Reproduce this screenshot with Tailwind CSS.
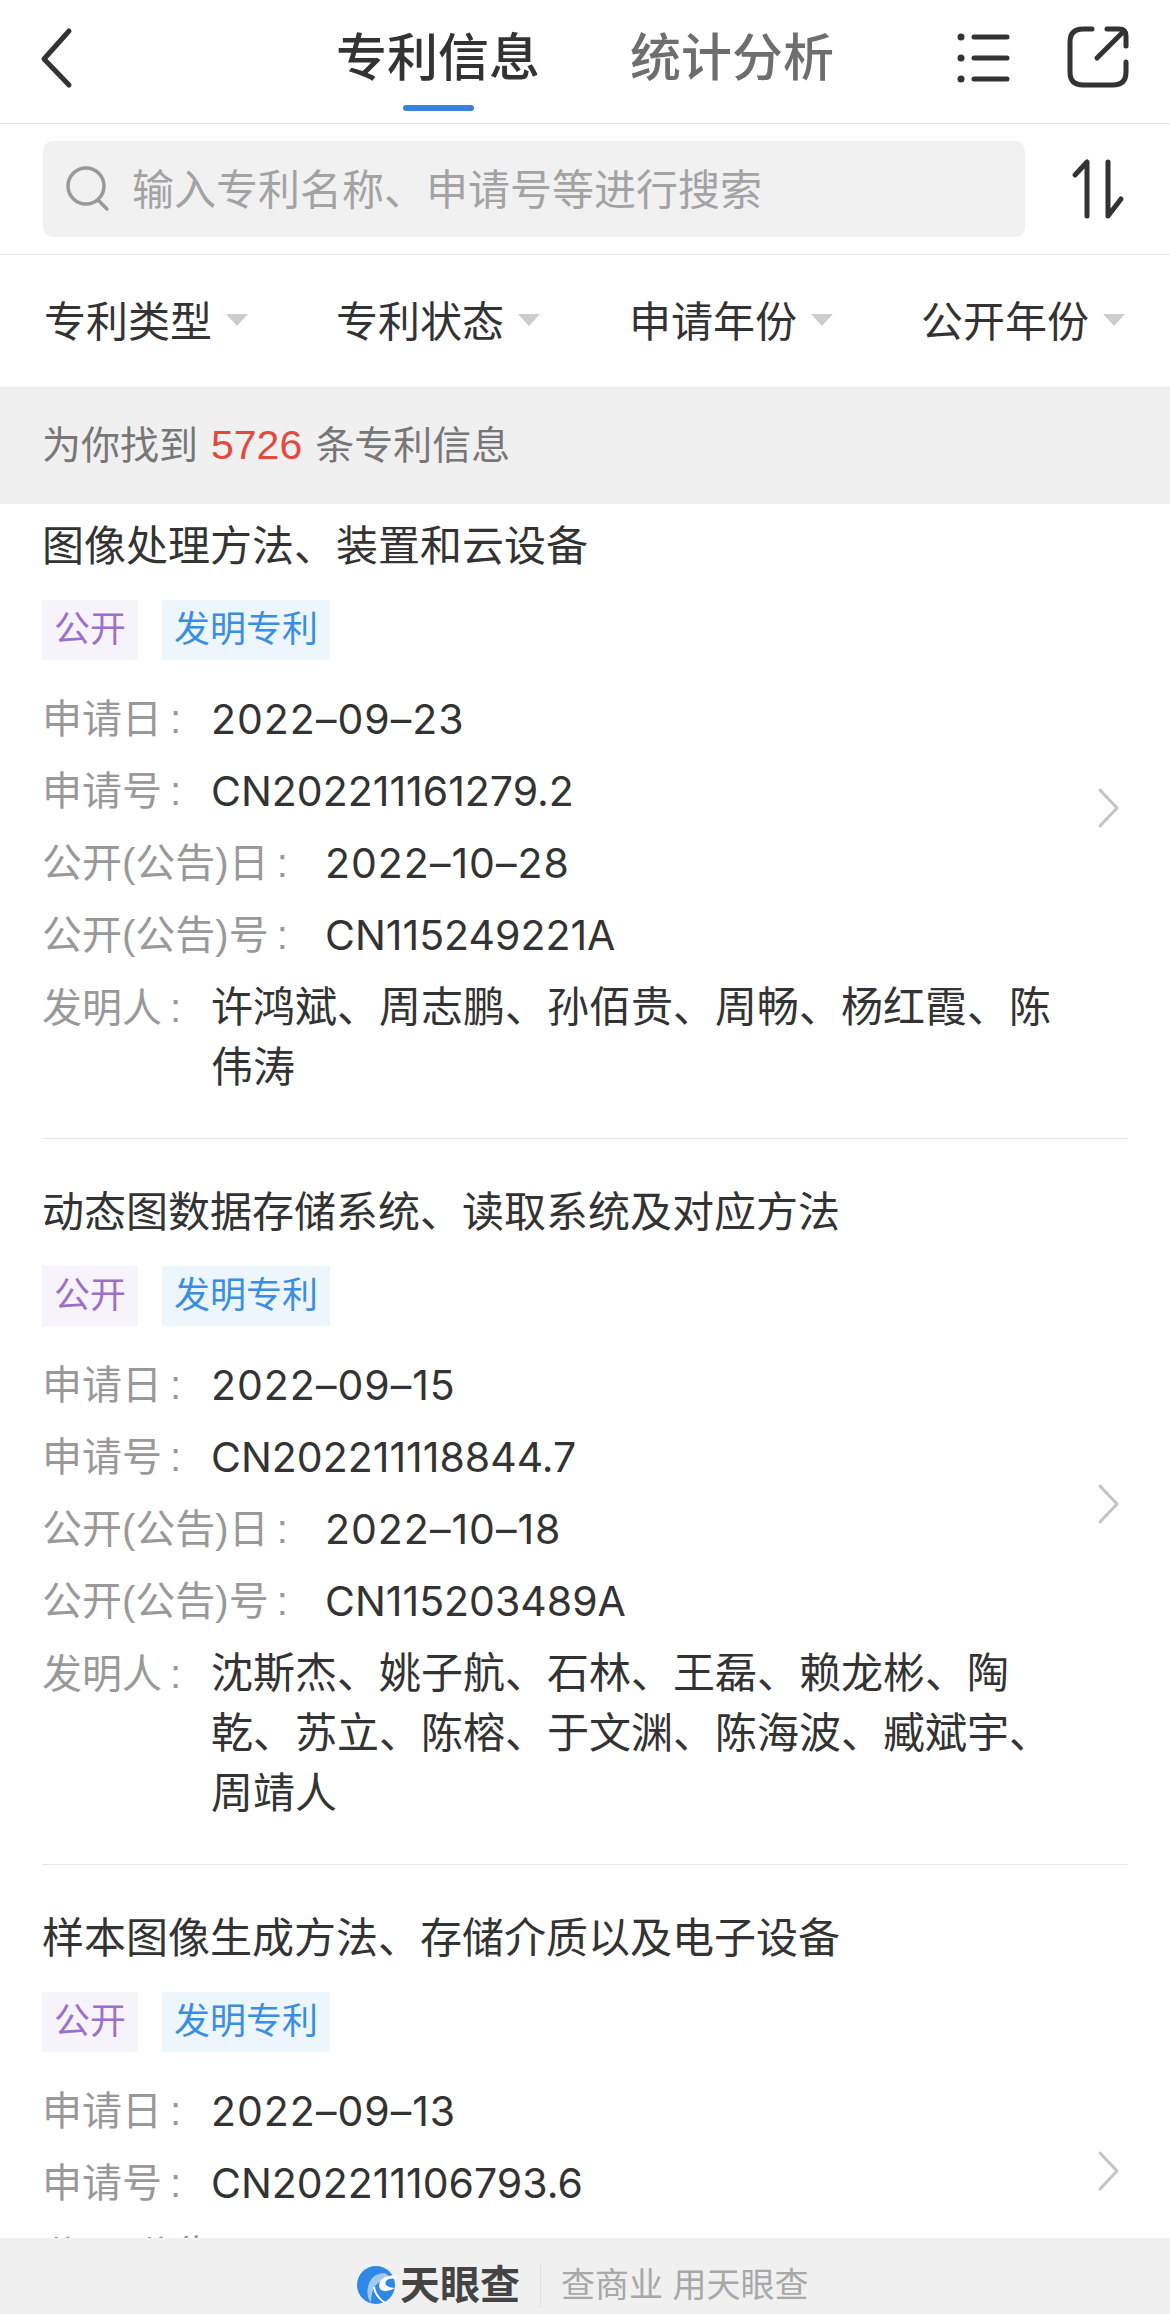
<!DOCTYPE html>
<html lang="zh-CN">

<head>
    <meta charset="UTF-8">
    <meta name="viewport" content="width=device-width, initial-scale=1.0">
    <title>专利信息</title>
    <script src="https://cdn.jsdelivr.net/npm/@tailwindcss/browser@4"></script>
</head>

<body class="bg-white">
    <div class="relative h-[2314px] overflow-hidden font-['Liberation_Sans','Noto_Sans_CJK_SC',sans-serif] text-[#333]">

        <!-- top nav -->
        <header class="h-[123px] flex items-start border-b border-[#e6e6e6] box-content">
            <svg class="w-[40px] h-[64px] ml-[36px] mt-[25px]" viewBox="0 0 40 64" fill="none" stroke="#333" stroke-width="5" stroke-linecap="round" stroke-linejoin="round">
                <path d="M33 6 L8 34 L33 60" />
            </svg>
            <div class="relative ml-[260px] mt-[24px] text-[51px] leading-[70px] font-medium">
                专利信息
                <span class="absolute left-[67px] top-[81px] w-[71px] h-[6px] rounded-sm bg-[#3b82e0]"></span>
            </div>
            <div class="ml-[90px] mt-[24px] text-[51px] leading-[70px] font-medium text-[#6e6e6e]">统计分析</div>
            <svg class="w-[60px] h-[60px] ml-[123px] mt-[28px]" viewBox="0 0 60 60" fill="none" stroke="#333" stroke-width="5" stroke-linecap="round">
                <circle cx="4" cy="9" r="3.5" fill="#333" stroke="none" />
                <circle cx="4" cy="30" r="3.5" fill="#333" stroke="none" />
                <circle cx="4" cy="51" r="3.5" fill="#333" stroke="none" />
                <path d="M17 9 H50 M17 30 H50 M17 51 H50" />
            </svg>
            <svg class="w-[64px] h-[64px] ml-[49px] mt-[25px]" viewBox="0 0 64 64" fill="none" stroke="#333" stroke-width="5" stroke-linecap="round" stroke-linejoin="round">
                <path d="M26 4 H17 Q4 4 4 17 V47 Q4 60 17 60 H47 Q60 60 60 47 V37" />
                <path d="M41 4 H53 Q60 4 60 11 V21" />
                <path d="M31 33 L58 6" />
            </svg>
        </header>

        <!-- search -->
        <div class="h-[130px] flex items-start border-b border-[#e6e6e6] box-content">
            <div class="w-[982px] h-[96px] ml-[43px] mt-[17px] rounded-[10px] bg-[#f1f1f1] flex items-center">
                <svg class="w-[48px] h-[48px] ml-[21px]" viewBox="0 0 48 48" fill="none" stroke="#999" stroke-width="3.5" stroke-linecap="round">
                    <circle cx="22" cy="21" r="18" />
                    <path d="M34 35 L43 44" />
                </svg>
                <span class="ml-[20px] mt-[2px] text-[42px] text-[#a3a3a3]">输入专利名称、申请号等进行搜索</span>
            </div>
            <svg class="w-[60px] h-[64px] ml-[44px] mt-[34px]" viewBox="0 0 60 64" fill="none" stroke="#333" stroke-width="5" stroke-linecap="round" stroke-linejoin="round">
                <path d="M6 17 L18 4 V58" />
                <path d="M39 4 V58 L52 41" />
            </svg>
        </div>

        <!-- filters -->
        <div class="h-[133px] pl-[44px] pt-[2px] flex items-center border-b border-[#e6e6e6] box-border text-[42px]">
            <div class="w-[292px] flex items-center">专利类型<span class="ml-[14px] mt-[-4px] w-0 h-0 border-x-[11px] border-x-transparent border-t-[12px] border-t-[#ccc]"></span></div>
            <div class="w-[293px] flex items-center">专利状态<span class="ml-[14px] mt-[-4px] w-0 h-0 border-x-[11px] border-x-transparent border-t-[12px] border-t-[#ccc]"></span></div>
            <div class="w-[292px] flex items-center">申请年份<span class="ml-[14px] mt-[-4px] w-0 h-0 border-x-[11px] border-x-transparent border-t-[12px] border-t-[#ccc]"></span></div>
            <div class="flex items-center">公开年份<span class="ml-[14px] mt-[-4px] w-0 h-0 border-x-[11px] border-x-transparent border-t-[12px] border-t-[#ccc]"></span></div>
        </div>

        <!-- result count -->
        <div class="h-[116px] pl-[42px] flex items-center bg-[#f0f0f0] text-[39px] text-[#777]">
            为你找到<span class="mx-[13px] text-[41px] text-[#e2493f]">5726</span>条专利信息
        </div>

        <!-- list, first card is scrolled a bit under the count bar -->
        <div class="h-[1811px] overflow-hidden">
            <div id="patents" class="mt-[-31px]"></div>
        </div>

        <!-- footer -->
        <footer class="absolute left-0 right-0 bottom-0 h-[76px] bg-[#f0f0f0] flex items-start">
            <svg class="w-[40px] h-[38px] ml-[357px] mt-[28px]" viewBox="0 0 40 38">
                <circle cx="19" cy="19" r="19" fill="#2f88e6" />
                <path d="M28 7 Q14 7 11 21 Q9 30 14 37 Q14 24 20 18 Q26 13 34 12 Z" fill="#fff" opacity="0.55" />
                <path d="M40 10 Q30 8 24 14 Q20 20 24 24 Q30 27 38 22 Q32 22 29 19 Q27 15 32 13 Q36 12 40 13 Z" fill="#fff" />
                <path d="M17 21 Q18 30 28 37" fill="none" stroke="#fff" stroke-width="2" />
            </svg>
            <span class="ml-[3px] mt-[17px] text-[40px] leading-[60px] font-bold text-[#444]">天眼查</span>
            <span class="ml-[20px] mt-[26px] w-px h-[44px] bg-[#e2e2e2]"></span>
            <span class="ml-[20px] mt-[17px] text-[34px] leading-[60px] text-[#a8a8a8]">查商业 用天眼查</span>
        </footer>
    </div>

    <script>
        const patents = [
            {
                title: '图像处理方法、装置和云设备',
                applyDate: '2022–09–23', applyNo: 'CN202211161279.2',
                pubDate: '2022–10–28', pubNo: 'CN115249221A',
                inventors: '许鸿斌、周志鹏、孙佰贵、周畅、杨红霞、陈伟涛'
            },
            {
                title: '动态图数据存储系统、读取系统及对应方法',
                applyDate: '2022–09–15', applyNo: 'CN202211118844.7',
                pubDate: '2022–10–18', pubNo: 'CN115203489A',
                inventors: '沈斯杰、姚子航、石林、王磊、赖龙彬、陶乾、苏立、陈榕、于文渊、陈海波、臧斌宇、周靖人'
            },
            {
                title: '样本图像生成方法、存储介质以及电子设备',
                applyDate: '2022–09–13', applyNo: 'CN202211106793.6'
            }
        ];

        const label = (text, width) => `<span class="shrink-0 text-[40px] text-[#999] ${width}">${text}<span class="ml-[8px]">:</span></span>`;

        const dateRow = (text, value, width) => `<div class="flex leading-[60px]">
                ${label(text, width)}
                <span class="text-[41px] tracking-[1px] font-['Inter',sans-serif]">${value}</span>
            </div>`;

        const noRow = (text, value, width) => `<div class="flex leading-[60px]">
                ${label(text, width)}
                <span class="text-[41px] font-['Inter',sans-serif]">${value}</span>
            </div>`;

        let html = '';
        patents.forEach(p => {
            html += `<div class="mx-[42px] pt-[44px] pb-[40px] flex items-center border-b border-[#e6e6e6] last:border-b-0 last:h-[608px]">
                <div class="flex-1 min-w-0 self-start">
                    <h3 class="text-[42px] leading-[60px] font-normal">${p.title}</h3>
                    <div class="mt-[23px] flex gap-[24px] text-[36px] leading-[60px]">
                        <span class="px-[12px] bg-[#f6f3fb] text-[#9c6fc9]">公开</span>
                        <span class="px-[12px] bg-[#edf5fd] text-[#3a8ee2]">发明专利</span>
                    </div>
                    <div class="mt-[29px] flex flex-col gap-[12px]">
                        ${dateRow('申请日', p.applyDate, 'w-[169px]')}
                        ${noRow('申请号', p.applyNo, 'w-[169px]')}
                        ${dateRow('公开(公告)日', p.pubDate || '', 'w-[283px]')}
                        ${p.pubNo ? noRow('公开(公告)号', p.pubNo, 'w-[283px]') : ''}
                        ${p.inventors ? `<div class="flex leading-[60px] mt-[1px]">
                            ${label('发明人', 'w-[169px]')}
                            <span class="w-[860px] text-[42px]">${p.inventors}</span>
                        </div>` : ''}
                    </div>
                </div>
                <svg class="shrink-0 w-[24px] h-[42px] mr-[7px]" viewBox="0 0 24 42" fill="none" stroke="#c4c4c4" stroke-width="3" stroke-linecap="round" stroke-linejoin="round">
                    <path d="M3 3 L20 21 L3 39" />
                </svg>
            </div>`;
        });
        document.getElementById('patents').innerHTML = html;
    </script>
</body>

</html>
